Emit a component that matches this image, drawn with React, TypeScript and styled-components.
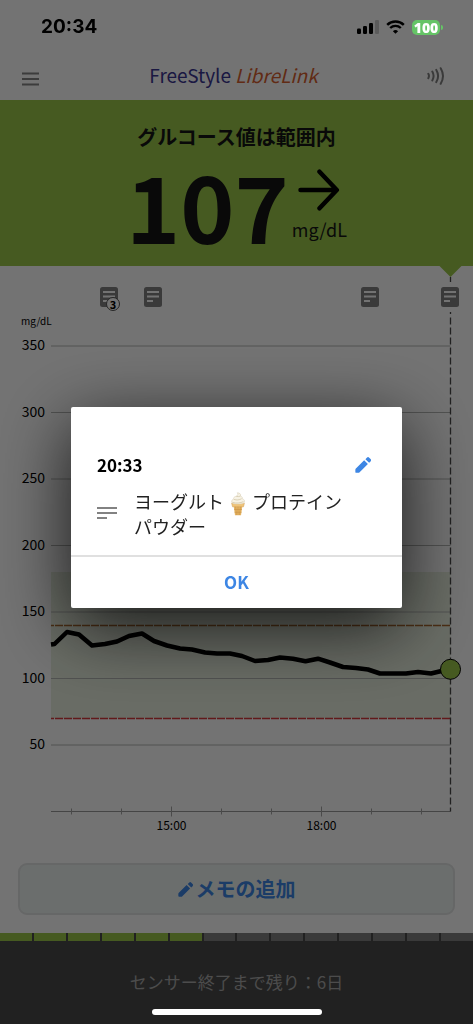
import React from 'react';
import styled, { createGlobalStyle } from 'styled-components';

const jp = "'Noto Sans CJK JP', 'Noto Sans', sans-serif";

const GlobalStyle = createGlobalStyle`
  * { box-sizing: border-box; }
  body { margin: 0; background: #fff; font-family: ${jp}; color: #141414; }
  button { font-family: inherit; border: 0; padding: 0; background: none; cursor: pointer; }
  h1, h2, p { margin: 0; }
`;

const Screen = styled.div`
  min-height: 100vh;
  display: flex;
  flex-direction: column;
`;

const StatusBar = styled.div`
  position: relative;
  z-index: 3;
  height: 54px;
  padding: 0 30px 0 41px;
  display: flex;
  align-items: center;
  justify-content: space-between;
`;

const Clock = styled.time`
  font: 700 19px/24px Inter, sans-serif;
  color: #000;
`;

const StatusIcons = styled.div`
  display: flex;
  align-items: center;
  gap: 7px;
`;

const BatteryRow = styled.div`
  display: flex;
  align-items: center;
  gap: 1px;
`;

const Battery = styled.span`
  width: 28px;
  height: 15px;
  border-radius: 5px;
  background: #65c466;
  color: #fff;
  font: 800 14px/15px 'Open Sans', sans-serif;
  text-align: center;
`;

const BatteryTip = styled.span`
  width: 2px;
  height: 5px;
  border-radius: 0 2px 2px 0;
  background: #65c466;
`;

const NavBar = styled.header`
  height: 46px;
  padding: 0 28px 0 22px;
  display: flex;
  align-items: center;
  justify-content: space-between;
`;

const IconButton = styled.button`
  display: flex;
`;

const Logo = styled.h1`
  padding-bottom: 5px;
  display: flex;
  gap: 4px;
  font-size: 19px;
  font-weight: 400;
  line-height: 28px;
  color: #3b3592;
`;

const LogoAccent = styled.em`
  color: #d8602f;
`;

const Banner = styled.section`
  padding: 24px 0 16px;
  background: #9bc84a;
  display: flex;
  flex-direction: column;
  align-items: center;
  gap: 8px;
`;

const BannerTitle = styled.h2`
  font-size: 20px;
  line-height: 26px;
`;

const Reading = styled.div`
  display: flex;
  gap: 3px;
`;

const ReadingValue = styled.strong`
  font-size: 92px;
  line-height: 92px;
`;

const Trend = styled.div`
  padding-top: 11px;
  display: flex;
  flex-direction: column;
  align-items: center;
  gap: 4px;
  font-size: 18px;
  line-height: 28px;
`;

const ChartArea = styled.section`
  position: relative;
`;

const ChartSvg = styled.svg`
  display: block;
  width: 100%;
  height: auto;
  font-family: ${jp};
`;

const NotePin = styled.button<{ $x: number }>`
  position: absolute;
  top: 21px;
  left: ${(p) => (p.$x / 473) * 100}%;
  margin-left: -9px;
  display: flex;
`;

const PinCount = styled.span`
  position: absolute;
  left: 6px;
  top: 10px;
  width: 14px;
  height: 14px;
  border: 1px solid #555;
  border-radius: 50%;
  background: #fff;
  color: #000;
  font-size: 11px;
  font-weight: 700;
  line-height: 12px;
`;

const AddNote = styled.button`
  margin: 0 18px 18px;
  height: 52px;
  border: 2px solid #e2e4e4;
  border-radius: 9px;
  background: #eef4f2;
  color: #3d86e4;
  display: flex;
  align-items: center;
  justify-content: center;
  gap: 3px;
  font-size: 20px;
  font-weight: 700;
  line-height: 28px;
`;

const Footer = styled.footer`
  flex: 1;
  min-height: 91px;
  background: #4b4b4b;
  color: #a8a8a8;
`;

const Segments = styled.div`
  display: flex;
  gap: 2px;
`;

const Segment = styled.span<{ $on: boolean }>`
  flex: 1;
  height: 8px;
  background: ${(p) => (p.$on ? '#9bc84a' : '#808080')};
`;

const SensorText = styled.p`
  padding-top: 28px;
  text-align: center;
  font-size: 17px;
  line-height: 26px;
`;

const Overlay = styled.div`
  position: fixed;
  inset: 0;
  z-index: 2;
  padding-bottom: 10px;
  background: rgba(0, 0, 0, 0.55);
  display: flex;
  align-items: center;
  justify-content: center;
`;

const Dialog = styled.div`
  width: 70%;
  border-radius: 2px;
  background: #fff;
  box-shadow: 0 18px 72px rgba(0, 0, 0, 0.8);
`;

const DialogBody = styled.div`
  padding: 45px 26px 17px;
`;

const DialogHead = styled.div`
  display: flex;
  align-items: center;
  justify-content: space-between;
  padding-right: 5px;
  font-size: 17px;
  font-weight: 700;
  line-height: 26px;
  color: #000;
`;

const NoteRow = styled.div`
  margin-top: 11px;
  display: flex;
  align-items: center;
  gap: 17px;
`;

const NoteText = styled.p`
  font-size: 18px;
  line-height: 24px;
  color: #222;
`;

const Cone = styled.svg`
  margin: -2px 5px;
  vertical-align: -5px;
`;

const OkButton = styled.button`
  width: 100%;
  height: 53px;
  border-top: 2px solid #e0e0e0;
  color: #3d86e4;
  font-size: 17px;
  font-weight: 700;
  line-height: 26px;
`;

const HomeIndicator = styled.div`
  position: fixed;
  z-index: 3;
  left: 50%;
  bottom: 9px;
  width: 170px;
  height: 6px;
  margin-left: -85px;
  border-radius: 3px;
  background: #fff;
`;

const Pencil = ({ size }: { size: number }) => (
  <svg width={size} height={size} viewBox="0 0 18 18" fill="#3d86e4" aria-hidden="true">
    <path d="M1 13 10.300 3.700l4.200 4.200L5.200 17.200q-.6.6-1.400.6H1.400q-1 0-1-1v-2.400q0-.8.6-1.400zM11.700 2.400l1.600-1.600a1.900 1.900 0 0 1 2.700 0l1.500 1.500a1.900 1.900 0 0 1 0 2.700l-1.600 1.600z" />
  </svg>
);

const NoteIcon = () => (
  <svg width="18" height="20" viewBox="0 0 18 20" aria-hidden="true">
    <rect width="18" height="20" rx="2.500" fill="#808080" />
    <path d="M3 5h12M3 9.500h12M3 14h6" stroke="#fff" strokeWidth="2" />
  </svg>
);

const IceCream = () => (
  <Cone width="18" height="24" viewBox="0 0 18 24" role="img" aria-label="🍦">
    <path d="M4.500 13h9l-1.500 10.200h-6z" fill="#e6b563" />
    <path d="M6.500 14l1 9M9 14v9M11.500 14l-1 9M5 17.500h8M5.600 20.300h7" stroke="#c58d43" strokeWidth=".5" />
    <path d="M2.600 11.200h12.800l-.9 3.600h-11z" fill="#f0c478" stroke="#cf9c55" strokeWidth=".5" />
    <path d="M8.200.8c2.700 0 4.100 1.600 3.200 3.300 1.700.4 2.400 1.700 1.900 2.800 2 .3 2.800 2 1.900 3.400-.8 1.500-2.900 1.700-6.200 1.700-3.500 0-5.900-.3-6.300-2-.4-1.500.6-2.500 2-2.700C4 5.800 5.300 4.600 7.200 4.200 9 3.700 9.400 2 8.200.8z" fill="#f7f2e4" stroke="#d4cbb2" strokeWidth=".5" />
    <path d="M5 7.400c2.600 1 5.500.6 7.600-.7M3.500 10.300c3.500 1.200 8 .8 11-.7M7.300 4.400c1.500.4 3 .2 4-.3" fill="none" stroke="#cfc3a3" strokeWidth=".7" />
  </Cone>
);

const levels = [350, 300, 250, 200, 150, 100, 50];
const levelY = (v: number) => 545.5 - v * 1.33;
const ticks = [71.5, 121.5, 171.5, 221.5, 271.5, 321.5, 371.5, 421.5];
const trace =
  '51,378.5 54.5,378 67,366 79,368.5 92,379.5 105,378 117,375.5 129,370 142,367.5 154,375 167,379.5 180,382.5 192,383.5 205,386.5 217,387.5 230,387.5 242,390 255,395 268,394 280,391.5 293,392.700 305.5,395.3 318,392.700 330,396.5 343,401 356,402 368,403.5 380,407.5 393,407.5 406,407.5 418,406 431,407.5 450,403';
const pins = [
  { x: 109, count: 3 },
  { x: 153, count: 1 },
  { x: 370, count: 1 },
  { x: 450, count: 1 },
];

const GlucoseChart = () => (
  <ChartArea>
    <ChartSvg viewBox="0 0 473 597" role="img" aria-label="mg/dL">
      <path d="M439.500 0h22l-11 11z" fill="#9bc84a" />
      <rect x="51" y="306" width="399.500" height="146.500" fill="#e9f0e0" />
      <text x="21" y="59" fontSize="10">mg/dL</text>
      {levels.map((v) => (
        <g key={v}>
          <path d={`M51 ${levelY(v)}H450.500`} stroke="#b4b6b4" />
          <text x="45" y={Math.round(levelY(v)) + 4} fontSize="14" textAnchor="end">{v}</text>
        </g>
      ))}
      <path d="M51 545.500H450.500" stroke="#9a9a9a" />
      {ticks.map((x) => {
        const half = x === 171.5 || x === 321.5 ? 5 : 3;
        return <path key={x} d={`M${x} ${545.5 - half}v${half * 2}`} stroke="#a4a4a4" />;
      })}
      <text x="171.500" y="564" fontSize="12" textAnchor="middle">15:00</text>
      <text x="321.500" y="564" fontSize="12" textAnchor="middle">18:00</text>
      <path d="M51 359.500H450.500" stroke="#a8672e" strokeWidth="1.300" strokeDasharray="8 1" strokeDashoffset="5" />
      <path d="M51 452.500H450.500" stroke="#d8393c" strokeWidth="1.300" strokeDasharray="8 1" strokeDashoffset="5" />
      <path d="M450.500 11v5M450.500 46v2M450.500 51.500V545.500" stroke="#4a4a4a" strokeWidth="1.300" strokeDasharray="7 3" />
      <polyline points={trace} fill="none" stroke="#000" strokeWidth="4.500" strokeLinejoin="round" />
      <circle cx="450.500" cy="403.300" r="10" fill="#9bc84a" stroke="#000" />
    </ChartSvg>
    {pins.map((pin) => (
      <NotePin key={pin.x} $x={pin.x} type="button" aria-label="メモ">
        <NoteIcon />
        {pin.count > 1 && <PinCount>{pin.count}</PinCount>}
      </NotePin>
    ))}
  </ChartArea>
);

export default function App() {
  return (
    <>
      <GlobalStyle />
      <Screen>
        <StatusBar>
          <Clock>20:34</Clock>
          <StatusIcons>
            <svg width="22" height="14" viewBox="0 0 22 14" aria-hidden="true">
              <rect x="0" y="8.500" width="4" height="5.500" rx="1.200" />
              <rect x="6" y="6" width="4" height="8" rx="1.200" />
              <rect x="12" y="3" width="4" height="11" rx="1.200" />
              <rect x="18" y="0" width="4" height="14" rx="1.200" fill="#000" opacity=".2" />
            </svg>
            <svg width="19" height="14" viewBox="0 0 19 14" fill="none" stroke="#000" aria-hidden="true">
              <path d="M1.200 4.800a12 12 0 0 1 16.600 0" strokeWidth="2.500" />
              <path d="M4.200 8a7.700 7.700 0 0 1 10.600 0" strokeWidth="2.400" />
              <path d="M9.500 13.800 6.900 11.200a3.800 3.800 0 0 1 5.200 0z" fill="#000" stroke="none" />
            </svg>
            <BatteryRow>
              <Battery>100</Battery>
              <BatteryTip />
            </BatteryRow>
          </StatusIcons>
        </StatusBar>
        <NavBar>
          <IconButton type="button" aria-label="メニュー">
            <svg width="18" height="18" viewBox="0 0 18 18" stroke="#858585" strokeWidth="2" aria-hidden="true">
              <path d="M0 5.500h17M0 11h17M0 16.500h17" />
            </svg>
          </IconButton>
          <Logo>
            <span>FreeStyle</span>
            <LogoAccent>LibreLink</LogoAccent>
          </Logo>
          <IconButton type="button" aria-label="スキャン">
            <svg width="18" height="20" viewBox="0 0 18 20" fill="none" stroke="#808080" strokeWidth="2" strokeLinecap="round" aria-hidden="true">
              <path d="M1.300 6.800q1.300 2.200 0 4.400M5.300 4.600q2.600 4.400 0 8.800M9.300 2.900q3.600 6.100 0 12.200M13.700 1.200q4.600 7.800 0 15.600" />
            </svg>
          </IconButton>
        </NavBar>
        <Banner>
          <BannerTitle>グルコース値は範囲内</BannerTitle>
          <Reading>
            <ReadingValue>107</ReadingValue>
            <Trend>
              <svg width="42" height="42" viewBox="0 0 42 42" fill="none" stroke="#000" strokeWidth="4.500" strokeLinecap="round" strokeLinejoin="round" aria-hidden="true">
                <path d="M2.500 21H38M21.500 2.700 38.800 21 21.500 39.300" />
              </svg>
              <span>mg/dL</span>
            </Trend>
          </Reading>
        </Banner>
        <GlucoseChart />
        <AddNote type="button">
          <Pencil size={15} />
          メモの追加
        </AddNote>
        <Footer>
          <Segments>
            {Array.from({ length: 14 }, (_, i) => (
              <Segment key={i} $on={i < 6} />
            ))}
          </Segments>
          <SensorText>センサー終了まで残り：6日</SensorText>
        </Footer>
      </Screen>
      <Overlay>
        <Dialog role="dialog" aria-modal="true">
          <DialogBody>
            <DialogHead>
              <time>20:33</time>
              <IconButton type="button" aria-label="編集">
                <Pencil size={16} />
              </IconButton>
            </DialogHead>
            <NoteRow>
              <svg width="20" height="12" viewBox="0 0 20 12" stroke="#828282" strokeWidth="2" aria-hidden="true">
                <path d="M0 1h20M0 6h20M0 11h10" />
              </svg>
              <NoteText>
                ヨーグルト
                <IceCream />
                プロテイン
                <br />
                パウダー
              </NoteText>
            </NoteRow>
          </DialogBody>
          <OkButton type="button">OK</OkButton>
        </Dialog>
      </Overlay>
      <HomeIndicator />
    </>
  );
}
